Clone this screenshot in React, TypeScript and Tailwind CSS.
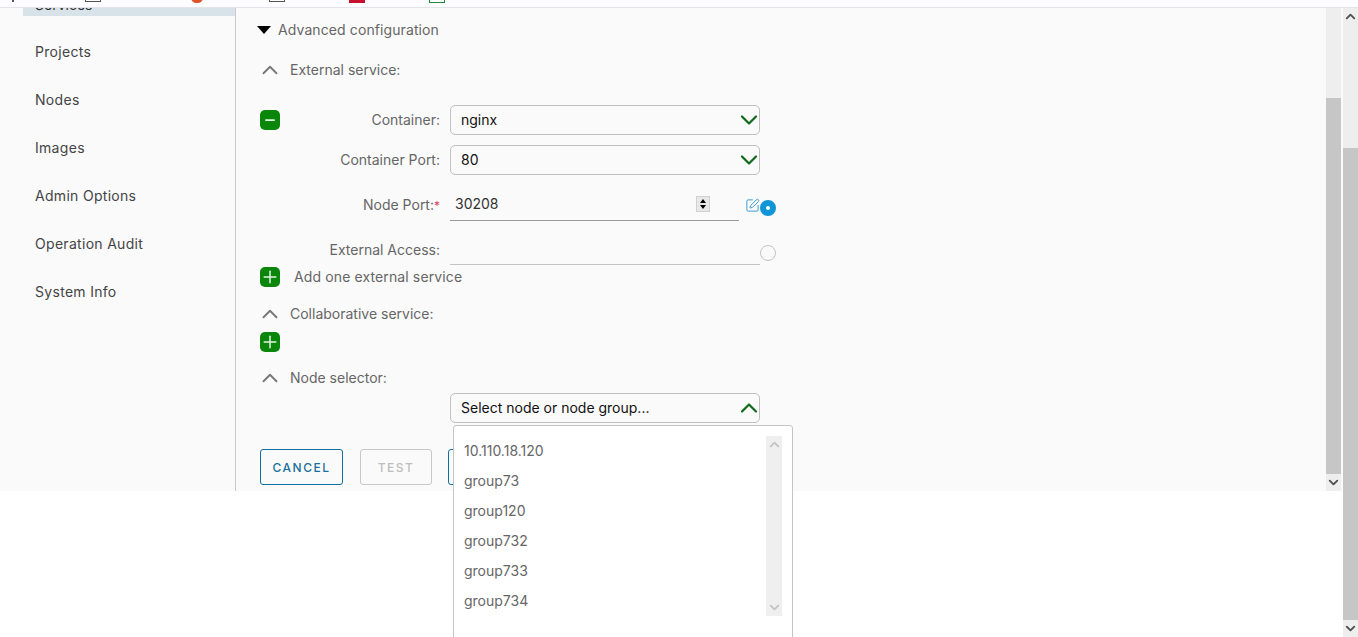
import { ChevronDown, ChevronUp, Minus, Plus, SquarePen } from 'lucide-react';

const navItems = ['Projects', 'Nodes', 'Images', 'Admin Options', 'Operation Audit', 'System Info'];
const options = ['10.110.18.120', 'group73', 'group120', 'group732', 'group733', 'group734'];

const GreenButton = ({ minus }: { minus?: boolean }) => (
    <span className="flex h-5 w-5 shrink-0 items-center justify-center rounded-[5px] bg-[#0a870a] text-[#e4f2e4]">
        {minus ? <Minus className="h-3.5 w-3.5" strokeWidth={3} /> : <Plus className="h-5 w-5" strokeWidth={1.8} />}
    </span>
);

const SectionTitle = ({ label }: { label: string }) => (
    <div className="flex h-5 items-center text-[#666666]">
        <ChevronUp className="ml-[-3px] h-[26px] w-[26px] text-[#777777]" strokeWidth={1.7} />
        <span className="ml-[7px]">{label}</span>
    </div>
);

const SelectBox = ({ value, open }: { value: string; open?: boolean }) => (
    <div className="flex h-[30px] w-[310px] items-center justify-between rounded-[5px] border border-[#c0c0c0] pl-[10px] text-[#111111]">
        <span>{value}</span>
        {open ? (
            <ChevronUp className="-mr-[4px] h-[28px] w-[28px] text-[#0f6b1c]" strokeWidth={1.9} />
        ) : (
            <ChevronDown className="-mr-[4px] h-[28px] w-[28px] text-[#0f6b1c]" strokeWidth={1.9} />
        )}
    </div>
);

const Label = ({ children }: { children: React.ReactNode }) => (
    <span className="w-[170px] pr-[10px] text-right text-[#666666]">{children}</span>
);

const ScrollArrow = ({ up, tone = 'text-[#505050]' }: { up?: boolean; tone?: string }) =>
    up ? <ChevronUp className={`h-[15px] w-[15px] ${tone}`} strokeWidth={3} /> : <ChevronDown className={`h-[15px] w-[15px] ${tone}`} strokeWidth={3} />;

export default function App() {
    return (
        <div className="relative flex h-[637px] w-[1358px] flex-col overflow-hidden bg-white font-['Inter',sans-serif] text-[14px] leading-5">
            {/* browser bookmarks, cut off at the top */}
            <div className="flex h-[8px] overflow-hidden border-b border-[#e3e3ea] bg-[#fdfcff]">
                <span className="ml-[12px] mt-[-8px] h-[10px] w-[2px] bg-[#555555]" />
                <span className="ml-[71px] mt-[-8px] h-[10px] w-[16px] border border-[#555555]" />
                <span className="ml-[90px] mt-[-8px] h-[11px] w-[12px] rounded-full bg-[#e0522a]" />
                <span className="ml-[66px] mt-[-8px] h-[10px] w-[16px] border border-[#555555]" />
                <span className="ml-[64px] mt-[-8px] h-[11px] w-[16px] bg-[#c8102e]" />
                <span className="ml-[64px] mt-[-8px] h-[11px] w-[16px] border border-[#1d8a3a]" />
            </div>

            <div className="flex h-[483px] bg-[#fafafa]">
                {/* sidebar */}
                <aside className="w-[236px] shrink-0 border-r border-[#c8c8c8]">
                    <div className="ml-[23px] flex h-[8px] items-end overflow-hidden bg-[#d8e3e9] pb-[1px] pl-[12px]">
                        <span className="shrink-0 text-[#333333]">Services</span>
                    </div>
                    <nav className="mt-[26px] flex flex-col gap-[28px] pl-[35px] tracking-[0.3px] text-[#444444]">
                        {navItems.map((item) => (
                            <span key={item} className="h-5">{item}</span>
                        ))}
                    </nav>
                </aside>

                {/* form */}
                <main className="flex-1 pl-[24px] pt-[12px]">
                    <div className="flex h-5 items-center tracking-[0.1px] text-[#666666]">
                        <span className="ml-[-3px] mr-[7px] h-0 w-0 border-x-[7.5px] border-t-[8px] border-x-transparent border-t-black" />
                        Advanced configuration
                    </div>
                    <div className="mt-[20px]"><SectionTitle label="External service:" /></div>

                    <div className="mt-[25px] flex items-center">
                        <GreenButton minus />
                        <Label>Container:</Label>
                        <SelectBox value="nginx" />
                    </div>
                    <div className="mt-[10px] flex items-center pl-[20px]">
                        <Label>Container Port:</Label>
                        <SelectBox value="80" />
                    </div>
                    <div className="mt-[15px] flex items-center pl-[20px]">
                        <span className="w-[170px] pr-[10px] text-right text-[#666666]">
                            Node Port:<span className="text-[12px] text-[#d0455a]">*</span>
                        </span>
                        <div className="flex h-[31px] w-[289px] items-center justify-between border-b border-[#9a9a9a] pb-[2px] pl-[5px] pr-[29px] text-[#333333]">
                            <span>30208</span>
                            <span className="flex h-[16px] w-[14px] flex-col items-center justify-center border border-[#d0d0d0] bg-[#e8e8e8]">
                                <span className="h-0 w-0 border-x-[3px] border-b-[4px] border-x-transparent border-b-black" />
                                <span className="mt-[2px] h-0 w-0 border-x-[3px] border-t-[4px] border-x-transparent border-t-black" />
                            </span>
                        </div>
                        <SquarePen className="ml-[6px] h-[15px] w-[15px] text-[#3d9ad1]" strokeWidth={1.6} />
                        <span className="mt-[5px] flex h-4 w-4 items-center justify-center rounded-full bg-[#0d95d8]">
                            <span className="h-[4px] w-[4px] rounded-full bg-white" />
                        </span>
                    </div>
                    <div className="mt-[13px] flex items-center pl-[20px]">
                        <Label>External Access:</Label>
                        <div className="h-[31px] w-[310px] border-b border-[#c4c4c4]" />
                        <span className="mt-[6px] h-4 w-4 rounded-full border border-[#c4c4c4]" />
                    </div>
                    <div className="mt-[2px] flex h-5 items-center text-[#666666]">
                        <GreenButton />
                        <span className="ml-[14px] tracking-[0.12px]">Add one external service</span>
                    </div>
                    <div className="mt-[17px]"><SectionTitle label="Collaborative service:" /></div>
                    <div className="mt-[8px]"><GreenButton /></div>
                    <div className="mt-[16px]"><SectionTitle label="Node selector:" /></div>
                    <div className="ml-[190px] mt-[5px]"><SelectBox value="Select node or node group..." open /></div>

                    <div className="mt-[26px] flex text-[12px] font-medium tracking-[1.5px]">
                        <button className="h-[36px] w-[83px] rounded-[3px] border border-[#0f6f9f] pt-[1px] text-[#1a6f9c]">CANCEL</button>
                        <button className="ml-[17px] h-[36px] w-[72px] rounded-[3px] border border-[#c8c8c8] pt-[1px] text-[#bdbdbd]">TEST</button>
                        <button className="ml-[16px] h-[36px] w-[60px] rounded-[3px] border border-[#0f6f9f]" />
                    </div>
                </main>

                {/* inner scrollbar */}
                <div className="flex w-[15px] shrink-0 flex-col items-center bg-[#eeeeee]">
                    <div className="mt-[90px] w-full flex-1 bg-[#c6c6c6]" />
                    <div className="flex h-[17px] items-center justify-center"><ScrollArrow /></div>
                </div>
                <div className="w-[2px] shrink-0" />
                <div className="w-[15px] shrink-0" />
            </div>

            {/* outer scrollbar */}
            <div className="absolute bottom-0 right-0 top-[8px] flex w-[15px] flex-col items-center bg-[#eeeeee]">
                <div className="flex h-[17px] items-center justify-center"><ScrollArrow up /></div>
                <div className="mt-[123px] w-full flex-1 bg-[#c6c6c6]" />
                <div className="flex h-[17px] items-center justify-center"><ScrollArrow /></div>
            </div>

            {/* open dropdown */}
            <div className="absolute left-[453px] top-[425px] h-[230px] w-[340px] rounded-[3px] border border-[#c4c4c4] bg-white">
                <div className="flex pt-[10px]">
                    <ul className="flex-1 pl-[10px] text-[#666666]">
                        {options.map((option) => (
                            <li key={option} className="flex h-[30px] items-center">{option}</li>
                        ))}
                    </ul>
                    <div className="mr-[10px] flex h-[180px] w-[16px] flex-col items-center justify-between bg-[#efefef] py-[1px]">
                        <ScrollArrow up tone="text-[#c4c4c4]" />
                        <ScrollArrow tone="text-[#c4c4c4]" />
                    </div>
                </div>
            </div>
        </div>
    );
}
